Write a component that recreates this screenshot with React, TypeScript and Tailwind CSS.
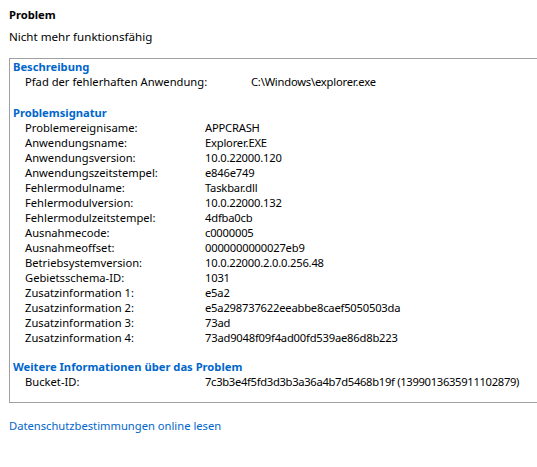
export default function App() {
  const signatur: [string, string][] = [
    ['Problemereignisame:', 'APPCRASH'],
    ['Anwendungsname:', 'Explorer.EXE'],
    ['Anwendungsversion:', '10.0.22000.120'],
    ['Anwendungszeitstempel:', 'e846e749'],
    ['Fehlermodulname:', 'Taskbar.dll'],
    ['Fehlermodulversion:', '10.0.22000.132'],
    ['Fehlermodulzeitstempel:', '4dfba0cb'],
    ['Ausnahmecode:', 'c0000005'],
    ['Ausnahmeoffset:', '0000000000027eb9'],
    ['Betriebsystemversion:', '10.0.22000.2.0.0.256.48'],
    ['Gebietsschema-ID:', '1031'],
    ['Zusatzinformation 1:', 'e5a2'],
    ['Zusatzinformation 2:', 'e5a298737622eeabbe8caef5050503da'],
    ['Zusatzinformation 3:', '73ad'],
    ['Zusatzinformation 4:', '73ad9048f09f4ad00fd539ae86d8b223'],
  ];

  return (
    <div className="w-[537px] h-[467px] overflow-hidden bg-white text-[11.2px] leading-[15px] text-black font-['Noto_Sans',sans-serif] whitespace-nowrap">
      <div className="pl-[9px] pt-[7px]">
        <div className="font-bold">Problem</div>
        <div className="mt-[7px] text-[11.6px]">Nicht mehr funktionsfähig</div>
      </div>

      <div className="ml-[9px] mt-[14px] w-[560px] border border-[#a0a0a0] pl-[3px] pb-[13px]">
        <div className="font-bold text-[#0066cc]">Beschreibung</div>
        <div className="flex pl-[12px]">
          <div className="w-[226px] shrink-0">Pfad der fehlerhaften Anwendung:</div>
          <div className="tracking-[-0.2px]">C:\Windows\explorer.exe</div>
        </div>

        <div className="mt-[16px] font-bold text-[#0066cc]">Problemsignatur</div>
        {signatur.map(([label, value]) => (
          <div key={label} className="flex pl-[12px]">
            <div className="w-[180px] shrink-0">{label}</div>
            <div className="tracking-[-0.2px]">{value}</div>
          </div>
        ))}

        <div className="mt-[14px] font-bold text-[#0066cc]">Weitere Informationen über das Problem</div>
        <div className="flex pl-[12px]">
          <div className="w-[180px] shrink-0">Bucket-ID:</div>
          <div className="tracking-[-0.3px]">7c3b3e4f5fd3d3b3a36a4b7d5468b19f (1399013635911102879)</div>
        </div>
      </div>

      <div className="pl-[9px] mt-[15px]">
        <a className="text-[#0066cc] cursor-pointer">Datenschutzbestimmungen online lesen</a>
      </div>
    </div>
  );
}
